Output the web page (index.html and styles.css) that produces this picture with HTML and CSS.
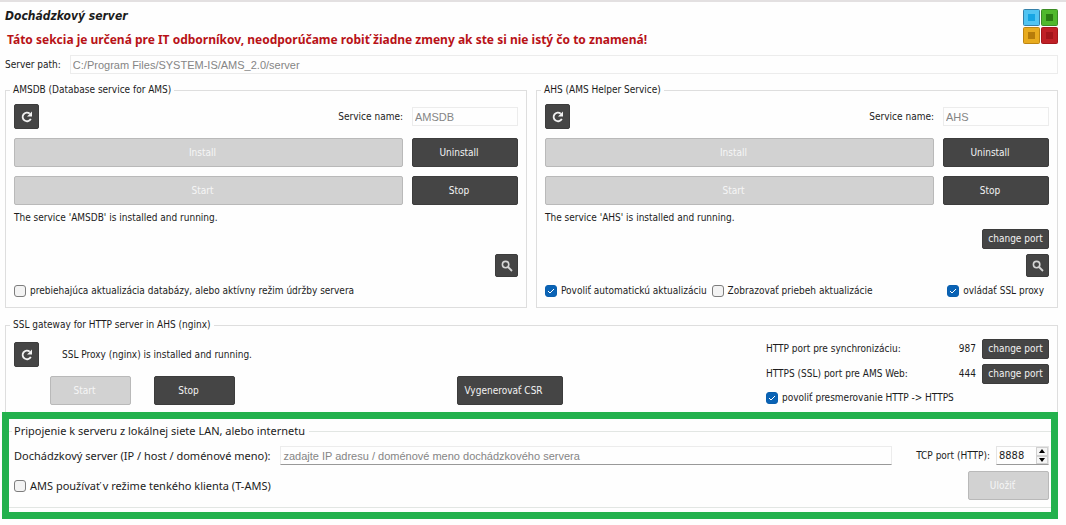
FILE: index.html
```html
<!DOCTYPE html>
<html lang="sk">
<head>
<meta charset="utf-8">
<title>Dochádzkový server</title>
<link rel="stylesheet" href="styles.css">
</head>
<body>
<svg class="sprite" aria-hidden="true">
  <symbol id="refresh" viewBox="0 0 14 14"><path d="M9.800 3.700A4.300 4.300 0 1 0 10.800 8.800" fill="none" stroke="currentColor" stroke-width="1.800"/><path d="M12 1.500v5H7z" fill="currentColor"/></symbol>
  <symbol id="search" viewBox="0 0 12 12"><circle cx="4.600" cy="4.600" r="3.200" fill="none" stroke="currentColor" stroke-width="1.600"/><path d="M7 7l4 4" stroke="currentColor" stroke-width="1.800"/></symbol>
</svg>
<main class="page">
  <header class="header">
    <div>
      <h1 class="title">Dochádzkový server</h1>
      <p class="warning">Táto sekcia je určená pre IT odborníkov, neodporúčame robiť žiadne zmeny ak ste si nie istý čo to znamená!</p>
    </div>
    <svg class="logo" viewBox="0 0 35 35" aria-hidden="true">
      <rect x=".5" y=".5" width="16" height="16" rx="1" fill="#52c4f2" stroke="#3580a8"/><rect x="5" y="5" width="7" height="7" fill="#16a5e4"/>
      <rect x="18.500" y=".5" width="16" height="16" rx="1" fill="#50b82c" stroke="#3b8c24"/><rect x="23" y="5" width="7" height="7" fill="#2b7c12"/>
      <rect x=".5" y="18.500" width="16" height="16" rx="1" fill="#e8ab1e" stroke="#bd8512"/><rect x="5" y="23" width="7" height="7" fill="#b67c0a"/>
      <rect x="18.500" y="18.500" width="16" height="16" rx="1" fill="#bf2026" stroke="#a3161c"/><rect x="23" y="23" width="7" height="7" fill="#a3151b"/>
    </svg>
  </header>

  <div class="path">
    <label for="path">Server path:</label>
    <input class="field" id="path" type="text" value="C:/Program Files/SYSTEM-IS/AMS_2.0/server" disabled>
  </div>

  <div class="services">
    <fieldset class="group">
      <legend>AMSDB (Database service for AMS)</legend>
      <div class="service">
        <div class="row service-head">
          <button class="btn icon" type="button" aria-label="Obnoviť"><svg class="i-refresh"><use href="#refresh"/></svg></button>
          <label class="push" for="db">Service name:</label>
          <input class="field name" id="db" type="text" value="AMSDB" disabled>
        </div>
        <div class="row"><button class="btn grow" type="button" disabled>Install</button><button class="btn side" type="button">Uninstall</button></div>
        <div class="row"><button class="btn grow" type="button" disabled>Start</button><button class="btn side" type="button">Stop</button></div>
      </div>
      <p class="status">The service 'AMSDB' is installed and running.</p>
      <div class="tools">
        <button class="btn icon small" type="button" aria-label="Hľadať"><svg class="i-search"><use href="#search"/></svg></button>
      </div>
      <div class="checks">
        <label class="check"><input type="checkbox">prebiehajúca aktualizácia databázy, alebo aktívny režim údržby servera</label>
      </div>
    </fieldset>

    <fieldset class="group">
      <legend>AHS (AMS Helper Service)</legend>
      <div class="service">
        <div class="row service-head">
          <button class="btn icon" type="button" aria-label="Obnoviť"><svg class="i-refresh"><use href="#refresh"/></svg></button>
          <label class="push" for="ahs">Service name:</label>
          <input class="field name" id="ahs" type="text" value="AHS" disabled>
        </div>
        <div class="row"><button class="btn grow" type="button" disabled>Install</button><button class="btn side" type="button">Uninstall</button></div>
        <div class="row"><button class="btn grow" type="button" disabled>Start</button><button class="btn side" type="button">Stop</button></div>
      </div>
      <p class="status">The service 'AHS' is installed and running.</p>
      <div class="tools">
        <button class="btn port" type="button">change port</button>
        <button class="btn icon small" type="button" aria-label="Hľadať"><svg class="i-search"><use href="#search"/></svg></button>
      </div>
      <div class="checks">
        <label class="check"><input type="checkbox" checked>Povoliť automatickú aktualizáciu</label>
        <label class="check"><input type="checkbox">Zobrazovať priebeh aktualizácie</label>
        <label class="check push inset"><input type="checkbox" checked>ovládať SSL proxy</label>
      </div>
    </fieldset>
  </div>

  <fieldset class="group gateway">
    <legend>SSL gateway for HTTP server in AHS (nginx)</legend>
    <div class="gateway-body">
      <div class="gateway-main">
        <div class="proxy">
          <button class="btn icon" type="button" aria-label="Obnoviť"><svg class="i-refresh"><use href="#refresh"/></svg></button>
          <span>SSL Proxy (nginx) is installed and running.</span>
        </div>
        <div class="proxy-actions">
          <button class="btn medium" type="button" disabled>Start</button>
          <button class="btn medium" type="button">Stop</button>
          <button class="btn side push" type="button">Vygenerovať CSR</button>
        </div>
      </div>
      <div class="ports">
        <div class="port-row"><span>HTTP port pre synchronizáciu:</span><span class="push">987</span><button class="btn port" type="button">change port</button></div>
        <div class="port-row"><span>HTTPS (SSL) port pre AMS Web:</span><span class="push">444</span><button class="btn port" type="button">change port</button></div>
        <label class="check"><input type="checkbox" checked>povoliť presmerovanie HTTP -&gt; HTTPS</label>
      </div>
    </div>
  </fieldset>

  <section class="highlight">
    <fieldset class="connection">
      <legend>Pripojenie k serveru z lokálnej siete LAN, alebo internetu</legend>
      <div class="connect-row">
        <label class="large" for="host">Dochádzkový server (IP / host / doménové meno):</label>
        <input class="field host" id="host" type="text" placeholder="zadajte IP adresu / doménové meno dochádzkového servera">
        <label for="tcp">TCP port (HTTP):</label>
        <span class="spin">
          <input class="spin-value" id="tcp" type="text" inputmode="numeric" value="8888">
          <span class="spin-buttons">
            <button type="button" aria-label="Zvýšiť"><svg viewBox="0 0 6 4"><path d="M0 4l3-4 3 4z"/></svg></button>
            <button type="button" aria-label="Znížiť"><svg viewBox="0 0 6 4"><path d="M0 0l3 4 3-4z"/></svg></button>
          </span>
        </span>
      </div>
      <div class="save-row">
        <label class="check large"><input type="checkbox">AMS používať v režime tenkého klienta (T-AMS)</label>
        <button class="btn medium" type="button" disabled>Uložiť</button>
      </div>
    </fieldset>
  </section>
</main>
</body>
</html>
```
FILE: styles.css
```css
* { box-sizing: border-box; }

body {
  margin: 0;
  background: #fefefe;
  color: #1c1c1c;
  font: 10px/14px "DejaVu Sans Condensed", "DejaVu Sans", sans-serif;
}

.sprite { position: absolute; width: 0; height: 0; }

.page {
  border-top: 2px solid #e3e0e1;
  padding: 0 8px 0 5px;
}

.header {
  display: flex;
  justify-content: space-between;
  align-items: flex-start;
  padding-top: 7px;
}

.title {
  margin: 0;
  font-size: 12px;
  line-height: 14px;
  font-style: italic;
  font-weight: bold;
}

.warning {
  margin: 9px 0 0 2px;
  color: #b81217;
  font-family: "Noto Sans", sans-serif;
  font-size: 12px;
  line-height: 16px;
  font-weight: bold;
}

.logo { width: 35px; height: 35px; flex: none; }

.path {
  display: flex;
  align-items: center;
  gap: 9px;
  margin-top: 7px;
}

.field {
  flex: 1;
  min-width: 0;
  height: 19px;
  padding: 0 2px;
  border: 1px solid #ececec;
  background: #fefefe;
  color: #858585;
  font: 11px "Liberation Sans", Arial, sans-serif;
}
.field::placeholder { color: #858585; opacity: 1; }
.field.name { flex: 0 0 106px; }

.services {
  display: grid;
  grid-template-columns: 1fr 1fr;
  gap: 9px;
  margin-top: 9px;
}

.group {
  min-width: 0;
  margin: 0;
  padding: 7px 8px 9px;
  border: 1px solid #dedede;
}
.group legend { margin-left: -4px; padding: 0 3px; }

.service { display: grid; gap: 9px; }

.row { display: flex; align-items: center; gap: 9px; }

.btn {
  height: 29px;
  padding: 0 12px 0 0;
  border: 1px solid #3c3c3c;
  border-radius: 2px;
  background: #454545;
  color: #f2f2f2;
  font: inherit;
  white-space: nowrap;
}
.btn:disabled { background: #d2d2d2; border-color: #b9b9b9; color: #f6f6f6; }
.btn.grow { flex: 1; }
.btn.side { width: 106px; }
.btn.medium { width: 81px; }
.btn.port { width: 67px; height: 20px; padding: 0; }
.btn.icon {
  display: grid;
  place-items: center;
  width: 25px;
  height: 25px;
  padding: 0;
}
.btn.icon.small { width: 23px; height: 23px; color: #d6d6d6; }
.i-refresh { width: 14px; height: 14px; }
.i-search { width: 12px; height: 12px; }

.push { margin-left: auto; }

.status { margin: 6px 0 0; }

.tools {
  display: flex;
  flex-direction: column;
  justify-content: flex-end;
  align-items: flex-end;
  gap: 5px;
  height: 52px;
}

.checks { display: flex; gap: 5px; margin-top: 7px; }

.check { display: flex; align-items: center; gap: 4px; }
.check.inset { padding-right: 5px; }
.check input {
  appearance: none;
  width: 12px;
  height: 12px;
  margin: 0;
  border: 1px solid #7d7d7d;
  border-radius: 3px;
  background: #f3f3f3;
}
.check input:checked {
  border-color: #0a5fae;
  background: #0a63b5 url("data:image/svg+xml,%3Csvg xmlns='http://www.w3.org/2000/svg' viewBox='0 0 10 10'%3E%3Cpath d='M2 5l2 2 4-4' fill='none' stroke='white'/%3E%3C/svg%3E");
}

.gateway { margin-top: 10px; padding-bottom: 7px; border-bottom: 0; }

.gateway-body { display: flex; justify-content: space-between; }

.gateway-main { width: 53%; padding-top: 3px; }

.proxy { display: flex; align-items: center; gap: 23px; }

.proxy-actions { display: flex; gap: 23px; margin-top: 9px; padding-left: 36px; }

.ports {
  display: flex;
  flex-direction: column;
  gap: 5px;
  width: 283px;
}
.ports .check { padding-top: 2px; }

.port-row { display: flex; align-items: center; gap: 6px; }

.highlight {
  margin: 0 0 0 -3px;
  border: 7px solid #23b14d;
  padding: 5px 0 4px;
}

.connection {
  min-width: 0;
  margin: 0;
  padding: 8px 2px 7px 5px;
  border: solid #e2e6e3;
  border-width: 1px 0;
}
.connection legend { margin-left: -2px; padding: 0 4px 0 2px; }
.connection legend, .large { font-family: "Noto Sans", sans-serif; font-size: 11px; }

.connect-row { display: flex; align-items: center; gap: 6px; }
.host { border-bottom-color: #999999; margin: 0 18px 0 4px; }

.spin {
  display: flex;
  width: 53px;
  height: 19px;
  border: 1px solid #e4e4e4;
  border-bottom-color: #999999;
}
.spin-value {
  flex: 1;
  min-width: 0;
  padding: 0 2px;
  border: 0;
  background: none;
  color: inherit;
  font: inherit;
  font-size: 11px;
}
.spin-buttons { display: grid; width: 12px; }
.spin-buttons button {
  display: grid;
  place-items: center;
  padding: 0;
  border: 1px solid #d0d0d0;
  background: #f5f5f5;
}
.spin-buttons svg { width: 6px; height: 4px; }

.save-row {
  display: flex;
  justify-content: space-between;
  align-items: center;
  margin-top: 6px;
}
```
